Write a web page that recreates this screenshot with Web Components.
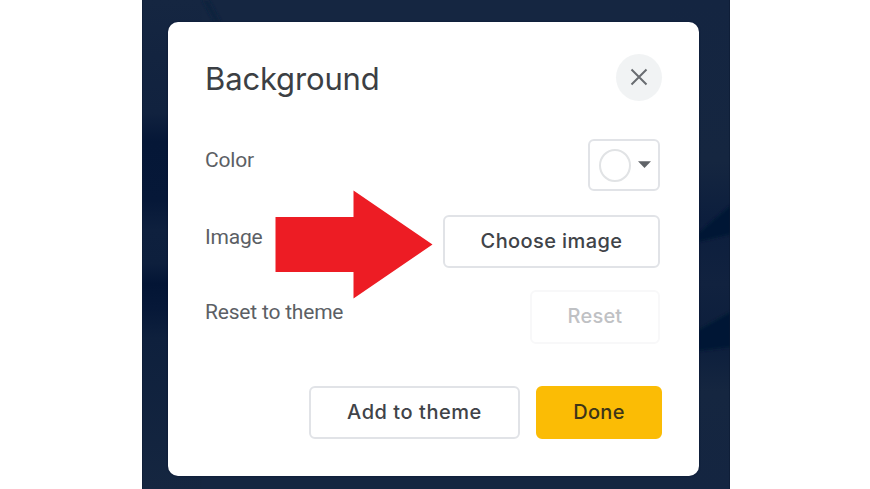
<!DOCTYPE html>
<html lang="en">
<head>
<meta charset="utf-8">
<title>Background</title>
<style>
  body {
    margin: 0;
    height: 489px;
    padding-left: 2px;
    background: #fff;
    overflow: hidden;
    display: flex;
    justify-content: center;
    font-family: Roboto, "Liberation Sans", sans-serif;
  }
</style>
</head>
<body>
<slide-backdrop>
  <background-dialog heading="Background">
    <setting-row label="Color">
      <color-picker></color-picker>
    </setting-row>
    <setting-row label="Image" style="--gap: 24px">
      <dialog-button style="--width: 217px; --spacing: 0.4px">Choose image</dialog-button>
    </setting-row>
    <setting-row label="Reset to theme" style="--gap: 22px">
      <dialog-button disabled style="--width: 130px; --height: 54px; --spacing: 0.2px">Reset</dialog-button>
    </setting-row>
    <dialog-button slot="actions" style="--width: 211px; --spacing: 0.55px">Add to theme</dialog-button>
    <dialog-button slot="actions" primary style="--width: 126px; --spacing: 0.25px">Done</dialog-button>
  </background-dialog>
  <pointer-arrow slot="overlay"></pointer-arrow>
</slide-backdrop>

<script>
class SlideBackdrop extends HTMLElement {
  constructor() {
    super();
    this.attachShadow({ mode: 'open' });
    this.shadowRoot.innerHTML = `
      <style>
        :host {
          display: block;
          position: relative;
          box-sizing: border-box;
          width: 588px;
          height: 489px;
          padding: 22px 31px 0 26px;
          overflow: hidden;
        }
        .scene {
          position: absolute;
          inset: 0;
        }
        .content {
          position: relative;
        }
      </style>
      <svg class="scene" width="588" height="489" viewBox="0 0 588 489">
        <defs>
          <linearGradient id="left" x1="0" y1="0" x2="0" y2="1">
            <stop offset="0" stop-color="#152641"/>
            <stop offset=".23" stop-color="#11223f"/>
            <stop offset=".29" stop-color="#051737"/>
            <stop offset=".41" stop-color="#061838"/>
            <stop offset=".47" stop-color="#0e203e"/>
            <stop offset=".54" stop-color="#0d1f3d"/>
            <stop offset=".58" stop-color="#031535"/>
            <stop offset=".63" stop-color="#061838"/>
            <stop offset=".69" stop-color="#0e203d"/>
            <stop offset="1" stop-color="#152640"/>
          </linearGradient>
          <linearGradient id="right" x1="0" y1="0" x2="0" y2="1">
            <stop offset="0" stop-color="#142541"/>
            <stop offset=".33" stop-color="#152640"/>
            <stop offset=".45" stop-color="#0c1e3d"/>
            <stop offset=".58" stop-color="#11223f"/>
            <stop offset=".7" stop-color="#0c1e3c"/>
            <stop offset=".8" stop-color="#152640"/>
            <stop offset="1" stop-color="#142541"/>
          </linearGradient>
          <filter id="soft"><feGaussianBlur stdDeviation="1.5"/></filter>
        </defs>
        <rect width="588" height="489" fill="#152641"/>
        <rect width="60" height="489" fill="url(#left)"/>
        <rect x="528" width="60" height="489" fill="url(#right)"/>
        <path d="M60 0h7l12 22h-7z" fill="#10213e" filter="url(#soft)"/>
        <path d="M556 233l34-29v30l-34 8z" fill="#031535" filter="url(#soft)"/>
        <path d="M556 330l34-19v36l-34 4z" fill="#031535" filter="url(#soft)"/>
        <path d="M0 0v489M588 0v489" stroke="#0b1830"/>
      </svg>
      <div class="content"><slot></slot></div>
      <slot name="overlay"></slot>
    `;
  }
}

class BackgroundDialog extends HTMLElement {
  constructor() {
    super();
    this.attachShadow({ mode: 'open' });
  }

  connectedCallback() {
    const heading = this.getAttribute('heading') || '';
    this.shadowRoot.innerHTML = `
      <style>
        :host {
          display: block;
          box-sizing: border-box;
          height: 454px;
          padding: 32px 37px 0;
          border-radius: 10px;
          background: #fff;
          box-shadow: 0 0 2px #051230;
        }
        header {
          display: flex;
          justify-content: space-between;
          height: 47px;
          margin-bottom: 38px;
        }
        h1 {
          margin: 0;
          padding-top: 1px;
          color: #3c3f44;
          font: 400 31px/48px Inter, "Open Sans", sans-serif;
          letter-spacing: -0.15px;
        }
        button {
          display: flex;
          align-items: center;
          justify-content: center;
          width: 46px;
          height: 47px;
          padding: 0 0 2px;
          border: 0;
          border-radius: 50%;
          background: #f1f3f4;
        }
        .rows {
          padding-right: 2px;
        }
        footer {
          display: flex;
          justify-content: flex-end;
          gap: 16px;
          margin-top: 42px;
        }
      </style>
      <header>
        <h1>${heading}</h1>
        <button aria-label="Close">
          <svg width="18" height="18" viewBox="0 0 18 18">
            <path d="M1.5 1.5L16.5 16.5M16.5 1.5L1.5 16.5" stroke="#696c71" stroke-width="2"/>
          </svg>
        </button>
      </header>
      <div class="rows"><slot></slot></div>
      <footer><slot name="actions"></slot></footer>
    `;
  }
}

class SettingRow extends HTMLElement {
  constructor() {
    super();
    this.attachShadow({ mode: 'open' });
  }

  connectedCallback() {
    const label = this.getAttribute('label') || '';
    this.shadowRoot.innerHTML = `
      <style>
        :host {
          display: flex;
          align-items: center;
          justify-content: space-between;
          margin-top: var(--gap, 0);
        }
        .label {
          padding-bottom: 10px;
          color: #5c5f65;
          font-size: 21px;
          line-height: 26px;
          letter-spacing: -0.2px;
        }
      </style>
      <span class="label">${label}</span>
      <slot></slot>
    `;
  }
}

class DialogButton extends HTMLElement {
  constructor() {
    super();
    this.attachShadow({ mode: 'open' });
    this.shadowRoot.innerHTML = `
      <style>
        :host {
          display: block;
          width: var(--width);
          height: var(--height, 53px);
        }
        button {
          box-sizing: border-box;
          width: 100%;
          height: 100%;
          padding: 0 0 2px;
          border: 2px solid #e1e3e7;
          border-radius: 6px;
          background: #fff;
          color: #404348;
          font: 500 20px/24px Inter, "Open Sans", sans-serif;
          letter-spacing: var(--spacing, 0);
          white-space: nowrap;
        }
        :host([disabled]) button {
          border-color: #f8f8f9;
          color: #bfc1c4;
        }
        :host([primary]) button {
          border-color: #fbbc05;
          background: #fbbc05;
          color: #3d3518;
        }
      </style>
      <button><slot></slot></button>
    `;
  }
}

class ColorPicker extends HTMLElement {
  constructor() {
    super();
    this.attachShadow({ mode: 'open' });
    this.shadowRoot.innerHTML = `
      <style>
        :host {
          display: flex;
          align-items: center;
          box-sizing: border-box;
          width: 72px;
          height: 52px;
          padding-left: 9px;
          gap: 7px;
          border: 2px solid #e1e3e7;
          border-radius: 6px;
        }
        .swatch {
          box-sizing: border-box;
          width: 32px;
          height: 33px;
          border: 2px solid #e1e3e5;
          border-radius: 50%;
          background: #fff;
        }
      </style>
      <span class="swatch"></span>
      <svg width="13" height="8" viewBox="0 0 13 8"><path d="M0 .3h13L6.500 7z" fill="#606368"/></svg>
    `;
  }
}

class PointerArrow extends HTMLElement {
  constructor() {
    super();
    this.attachShadow({ mode: 'open' });
    this.shadowRoot.innerHTML = `
      <style>
        /* floats over the dialog, pointing at the image button */
        :host {
          position: absolute;
          left: 133px;
          top: 190px;
        }
        svg {
          display: block;
        }
      </style>
      <svg width="158" height="110" viewBox="0 0 158 110">
        <path d="M.5 27H78.500V.5L157.500 54.500L78.500 108.500V82H.5z" fill="#ed1c24"/>
      </svg>
    `;
  }
}

customElements.define('slide-backdrop', SlideBackdrop);
customElements.define('background-dialog', BackgroundDialog);
customElements.define('setting-row', SettingRow);
customElements.define('dialog-button', DialogButton);
customElements.define('color-picker', ColorPicker);
customElements.define('pointer-arrow', PointerArrow);
</script>
</body>
</html>
